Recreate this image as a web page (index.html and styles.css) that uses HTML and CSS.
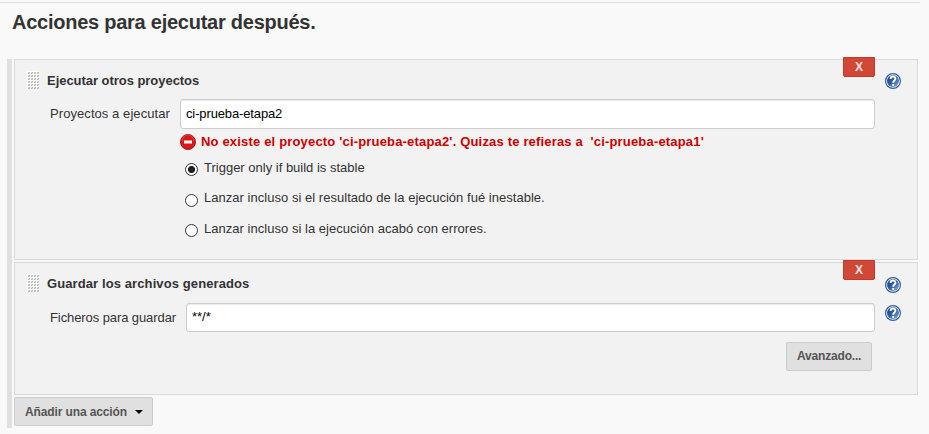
FILE: index.html
```
<!DOCTYPE html>
<html lang="es">
<head>
<meta charset="utf-8">
<title>Acciones para ejecutar después</title>
<link rel="stylesheet" href="styles.css">
</head>
<body>
<svg class="defs" aria-hidden="true">
  <defs>
    <linearGradient id="blue" x1="0" y1="0" x2="1" y2="1">
      <stop offset="0" stop-color="#16458c"/><stop offset=".45" stop-color="#2c5a9d"/><stop offset="1" stop-color="#86a9d6"/>
    </linearGradient>
    <symbol id="help" viewBox="0 0 16 16">
      <circle cx="8" cy="8" r="7.4" fill="#fff" stroke="#315b99" stroke-width="1.2"/>
      <circle cx="8" cy="8" r="6" fill="url(#blue)"/>
      <path d="M5.6 5.9C5.6 2.8 10.4 2.8 10.4 5.7C10.4 7.6 8.2 7.5 8.2 9.7M8.2 11V13" fill="none" stroke="#fff" stroke-width="1.9"/>
    </symbol>
    <pattern id="dots" width="3" height="3" patternUnits="userSpaceOnUse">
      <path d="M0 0h3v3H0z" fill="#fff"/><path d="M1 1h2v2H1z" fill="#d0d0cc"/><path d="M2 1h1v1H2zM1 2h1v1H1z" fill="#b8b8b4"/>
    </pattern>
  </defs>
</svg>
<main class="page">
  <h1 class="title"><span>Acciones para ejecutar después.</span></h1>
  <div class="actions">
    <section class="panel panel-projects">
      <button class="remove">X</button>
      <header class="head">
        <svg class="grip"><rect width="12" height="18" fill="url(#dots)"/></svg>
        <h2 class="t-run">Ejecutar otros proyectos</h2>
        <svg class="help"><use href="#help"/></svg>
      </header>
      <div class="row">
        <label class="t-projects" for="projects">Proyectos a ejecutar</label>
        <input id="projects" type="text" value="ci-prueba-etapa2">
      </div>
      <p class="error">
        <svg class="error-icon" viewBox="0 0 16 16"><circle cx="8" cy="8" r="7.5" fill="#dc1717" stroke="#a51818"/><path d="M2 7A6 6 0 0 1 14 7" fill="none" stroke="#ef5b5b" stroke-width=".6"/><path d="M4 6.5h8v3H4z" fill="#fff"/></svg>
        <span>No existe el proyecto 'ci-prueba-etapa2'. Quizas te refieras a &nbsp;'ci-prueba-etapa1'</span>
      </p>
      <div class="options">
        <label class="option"><input type="radio" name="when" checked><span class="t-stable">Trigger only if build is stable</span></label>
        <label class="option"><input type="radio" name="when"><span class="t-unstable">Lanzar incluso si el resultado de la ejecución fué inestable.</span></label>
        <label class="option"><input type="radio" name="when"><span class="t-fail">Lanzar incluso si la ejecución acabó con errores.</span></label>
      </div>
    </section>
    <section class="panel panel-files">
      <button class="remove">X</button>
      <header class="head">
        <svg class="grip"><rect width="12" height="18" fill="url(#dots)"/></svg>
        <h2 class="t-save">Guardar los archivos generados</h2>
        <svg class="help"><use href="#help"/></svg>
      </header>
      <div class="row">
        <label class="t-files" for="files">Ficheros para guardar</label>
        <input id="files" type="text" value="**/*">
        <svg class="help"><use href="#help"/></svg>
      </div>
      <div class="footer"><button class="btn advanced">Avanzado...</button></div>
    </section>
    <button class="btn add"><span>Añadir una acción</span><svg class="caret" viewBox="0 0 8 4"><path d="M0 0h8L4 4z"/></svg></button>
  </div>
</main>
</body>
</html>
```
FILE: styles.css
```
* { box-sizing: border-box; }
body {
  margin: 0;
  height: 434px;
  overflow: hidden;
  background: #f9f9f9;
  color: #333;
  font: 13px/16px "Liberation Sans", Arial, sans-serif;
}
h1, h2, p { margin: 0; }
button, input { font: inherit; margin: 0; }
.defs { position: absolute; width: 0; height: 0; }
.page { padding-top: 2px; }
.title {
  width: 920px;
  height: 57px;
  padding: 7px 0 0 12px;
  border-top: 1px solid #ddd;
  font-size: 20px;
  line-height: 24px;
  letter-spacing: -.25px;
}
.actions {
  width: 911px;
  height: 369px;
  margin-left: 7px;
  padding-left: 2px;
  border-left: 5px solid #e0e0e0;
}
.panel {
  position: relative;
  border: 1px solid #d9d9d9;
  background: #f2f2f2;
  padding: 11px 16px 0 12px;
}
.panel-projects { height: 201px; }
.panel-files { height: 133px; margin: 2px 0; padding-top: 12px; }
.remove {
  position: absolute;
  top: -3px;
  right: 42px;
  width: 32px;
  height: 20px;
  padding: 0;
  border: 1px solid #bf3a2b;
  border-radius: 0 0 2px 2px;
  background: #d14836;
  color: #f6e4e1;
  font-size: 12px;
  font-weight: bold;
  line-height: 18px;
}
.head { display: flex; height: 18px; align-items: flex-start; }
.head h2 { margin-left: 8px; padding-top: 1px; font-size: 13px; line-height: 16px; }
.head .t-run { padding-top: 2px; letter-spacing: -.04px; }
.t-save { letter-spacing: .1px; }
.grip { width: 12px; height: 18px; flex: none; }
.panel-files .grip { margin-top: -1px; }
.help { width: 16px; height: 16px; flex: none; }
.head .help { margin: 2px 0 0 auto; }
.row { display: flex; align-items: center; padding-left: 23px; }
.panel-projects .row { height: 30px; margin-top: 10px; padding-right: 26px; }
.panel-files .row { height: 29px; margin-top: 10px; }
.row label { flex: none; white-space: nowrap; }
.row input {
  flex: 1;
  min-width: 0;
  height: 100%;
  margin-left: 10px;
  padding: 0 5px 2px;
  border: 1px solid #ccc;
  border-radius: 3px;
  background: #fff;
  box-shadow: inset 0 1px 1px rgba(0, 0, 0, .08);
  color: #000;
  outline: 0;
}
.panel-projects .row input { letter-spacing: -.13px; }
.panel-projects .row label { width: 120px; letter-spacing: .07px; }
.panel-files .row label { width: 126px; letter-spacing: -.09px; }
.row .help { margin: -10px 0 0 10px; }
.error { display: flex; margin: 5px 0 0 153px; color: #c00; font-weight: bold; letter-spacing: .176px; white-space: nowrap; }
.error-icon { width: 16px; height: 16px; margin-right: 5px; flex: none; }
.options { padding: 10px 0 0 158px; }
.option { display: flex; height: 30px; }
.option:nth-child(2) { height: 31px; }
.option span { white-space: nowrap; margin-left: 6px; }
.t-unstable, .t-fail { letter-spacing: .03px; }
.option input {
  appearance: none;
  width: 13px;
  height: 13px;
  margin-top: 3px;
  border: 1px solid #333;
  border-radius: 50%;
  background: #fff;
  flex: none;
}
.option:nth-child(2) input { margin-top: 4px; }
.option:first-child input { background: radial-gradient(circle, #222 3.2px, #fff 3.9px); }
.footer { display: flex; justify-content: flex-end; padding: 10px 29px 0 0; }
.btn {
  height: 29px;
  padding: 0 10px;
  border: 1px solid #ccc;
  border-radius: 2px;
  background: #e0e0e0;
  color: #555;
  font-size: 12px;
  font-weight: bold;
  letter-spacing: -.12px;
  white-space: nowrap;
}
.advanced { width: 86px; padding-bottom: 2px; letter-spacing: -.18px; }
.add { display: flex; align-items: center; justify-content: space-between; width: 139px; padding-right: 9px; }
.caret { width: 8px; height: 4px; fill: #000; }
```
